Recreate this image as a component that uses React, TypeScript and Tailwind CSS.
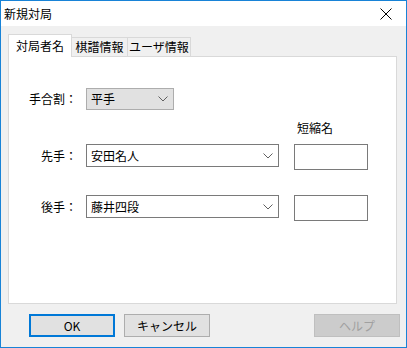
import React from 'react';

const font = { fontFamily: '"Noto Sans CJK JP", "Noto Sans", sans-serif' };

function Chevron() {
  return (
    <svg width="10" height="6" viewBox="0 0 10 6" fill="none" stroke="#606060" strokeWidth="1">
      <polyline points="0.5,0.5 5,5 9.5,0.5" />
    </svg>
  );
}

function Combo({ value, width }: { value: string; width: string }) {
  return (
    <div className={`${width} h-[23px] bg-white border border-[#7a7a7a] flex items-center justify-between pl-[4px] pr-[5px]`}>
      <span className="text-[12px] leading-none text-black">{value}</span>
      <Chevron />
    </div>
  );
}

export default function App() {
  return (
    <div
      className="w-[407px] h-[348px] border border-[#1883d7] bg-[#f0f0f0] flex flex-col text-black"
      style={font}
    >
      {/* title bar */}
      <div className="h-[25px] bg-white flex items-center justify-between pl-[3px] pr-[14px]">
        <span className="text-[12px] leading-none pt-[1px]">新規対局</span>
        <svg width="12" height="12" viewBox="0 0 12 12" stroke="#000" strokeWidth="1">
          <line x1="0.5" y1="0.5" x2="11.5" y2="11.5" />
          <line x1="11.5" y1="0.5" x2="0.5" y2="11.5" />
        </svg>
      </div>

      <div className="flex-1 flex flex-col pl-[7px] pr-[9px] pt-[8px]">
        {/* tabs */}
        <div className="flex items-end h-[23px] relative z-10">
          <div className="h-[23px] w-[64px] bg-white border border-b-0 border-[#d9d9d9] flex items-center justify-center text-[12px] leading-none">
            対局者名
          </div>
          <div className="h-[20px] w-[56px] bg-[#f0f0f0] border border-l-0 border-[#d9d9d9] flex items-center justify-center text-[12px] leading-none">
            棋譜情報
          </div>
          <div className="h-[20px] w-[63px] bg-[#f0f0f0] border border-l-0 border-[#d9d9d9] flex items-center justify-center text-[12px] leading-none">
            ユーザ情報
          </div>
        </div>

        {/* panel */}
        <div className="-mt-px h-[248px] bg-white border border-[#d9d9d9] flex flex-col pt-[31px]">
          <div className="flex items-center">
            <div className="w-[77px] pr-[9px] text-right text-[12px] leading-none">手合割：</div>
            <div className="w-[88px] h-[22px] bg-[#e1e1e1] border border-[#adadad] flex items-center justify-between pl-[4px] pr-[5px]">
              <span className="text-[12px] leading-none">平手</span>
              <Chevron />
            </div>
          </div>

          <div className="flex mt-[10px] h-[16px] items-center">
            <div className="ml-[288px] text-[12px] leading-none">短縮名</div>
          </div>

          <div className="flex items-start mt-[8px]">
            <div className="w-[77px] pr-[9px] text-right text-[12px] leading-none h-[23px] flex items-center justify-end">先手：</div>
            <Combo value="安田名人" width="w-[193px]" />
            <div className="ml-[15px] w-[74px] h-[26px] bg-white border border-[#7a7a7a]" />
          </div>

          <div className="flex items-start mt-[25px]">
            <div className="w-[77px] pr-[9px] text-right text-[12px] leading-none h-[23px] flex items-center justify-end">後手：</div>
            <Combo value="藤井四段" width="w-[193px]" />
            <div className="ml-[15px] w-[74px] h-[26px] bg-white border border-[#7a7a7a]" />
          </div>
        </div>

        {/* buttons */}
        <div className="flex mt-[10px] pl-[21px]">
          <div className="w-[86px] h-[23px] bg-[#e1e1e1] border-2 border-[#0078d7] flex items-center justify-center text-[12px] leading-none">
            OK
          </div>
          <div className="ml-[9px] w-[86px] h-[23px] bg-[#e1e1e1] border border-[#adadad] flex items-center justify-center text-[12px] leading-none">
            キャンセル
          </div>
          <div className="ml-auto -mr-[3px] w-[86px] h-[23px] bg-[#cccccc] border border-[#bfbfbf] flex items-center justify-center text-[12px] leading-none text-[#a0a0a0]">
            ヘルプ
          </div>
        </div>
      </div>
    </div>
  );
}
